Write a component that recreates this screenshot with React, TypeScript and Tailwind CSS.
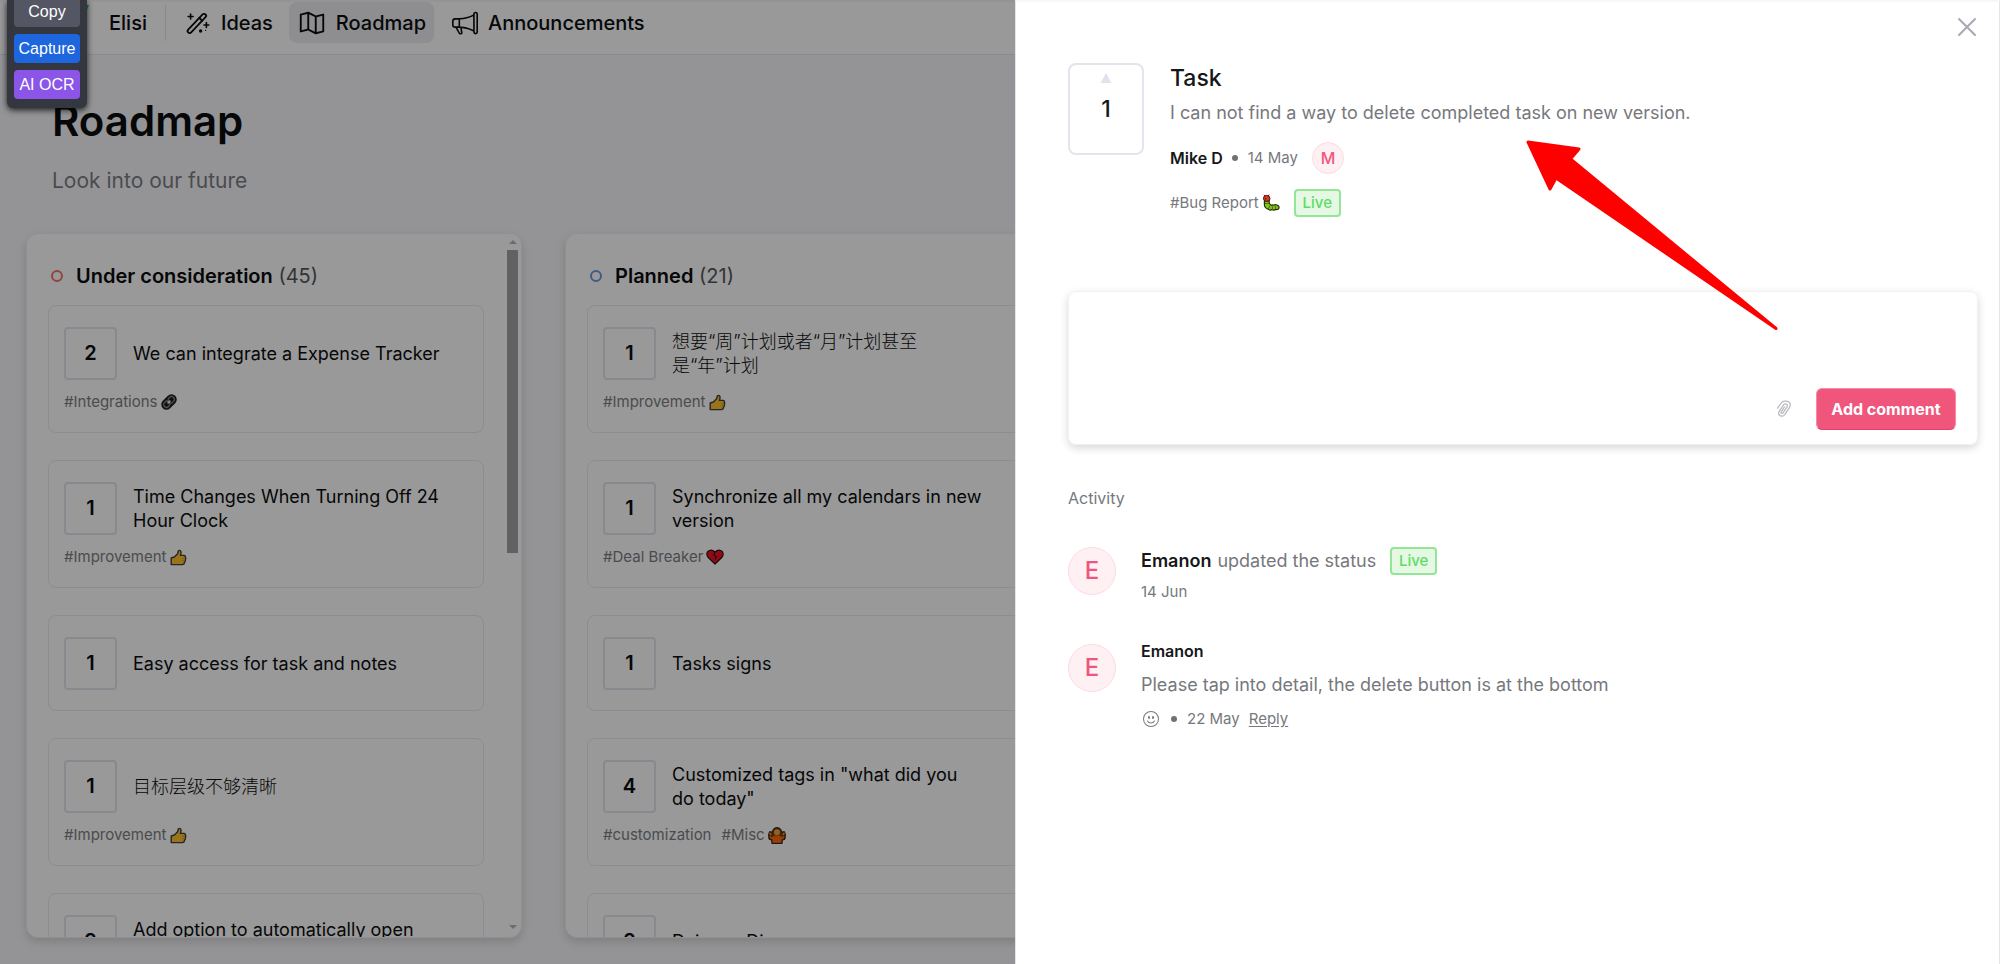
import type { ReactNode } from "react";
import { PiMapTrifold } from "react-icons/pi";
import { BsMegaphone, BsEmojiSmile } from "react-icons/bs";

function WandIcon() {
  return (
    <svg width="24" height="24" viewBox="0 0 24 24" fill="none" stroke="currentColor" strokeWidth="1.8" strokeLinecap="round" strokeLinejoin="round" aria-hidden="true">
      <path d="M2.2 18.6 16.6 3.4a2 2 0 0 1 2.9 0 2 2 0 0 1 0 2.8L5.2 21.4a2 2 0 0 1-3 0 2 2 0 0 1 0-2.8Z" />
      <path d="m13.4 7 2.8 2.8" />
      <path d="M4.6 3v5M2.1 5.5h5M20.4 11.6v4.8M18 14h4.8" strokeWidth="1.6" />
      <circle cx="14.6" cy="20" r="1.7" fill="currentColor" stroke="none" />
      <circle cx="19.6" cy="19.4" r="0.6" fill="currentColor" stroke="none" />
    </svg>
  );
}

function ThumbIcon() {
  return (
    <svg width="17" height="17" viewBox="0 0 17 17" className="shrink-0" aria-hidden="true">
      <path d="M1.2 9 4.4 8 7.6 4.8 8.400 1.800Q9.600.8 10.800 2.200q.6 1.600-.4 4.200h3.600q1.800.4 1.400 2 .6 1.200 0 2.400.2 1.400-.8 2.200-.2 2.600-2.400 2.600H1.200Z" fill="#ffc12e" stroke="#3f4043" strokeWidth="1.4" strokeLinejoin="round" />
      <path d="M12 9.300h2.600M12 11.800h2.400" stroke="#c98a12" strokeWidth="0.8" />
    </svg>
  );
}

function LinkIcon() {
  return (
    <svg width="18" height="18" viewBox="0 0 18 18" className="shrink-0" aria-hidden="true">
      <g transform="rotate(-45 9 9)">
        <rect x="0.2" y="3.8" width="17.600" height="10.400" rx="5.200" fill="#1d1d1f" />
        <rect x="2.600" y="6.200" width="6.400" height="5.600" rx="2.800" fill="none" stroke="#8b8b90" strokeWidth="1.200" />
        <rect x="8.800" y="6.200" width="6.600" height="5.600" rx="2.800" fill="none" stroke="#8b8b90" strokeWidth="1.200" />
        <rect x="7" y="8" width="4" height="2" rx="1" fill="#e8e8ea" />
      </g>
    </svg>
  );
}

function BrokenHeartIcon() {
  return (
    <svg width="18" height="16" viewBox="0 0 18 16" className="shrink-0" aria-hidden="true">
      <path d="M9 15 2 8.200Q-.2 4.800 1.800 2.400 5.400-.600 9 3 12.600-.600 16.200 2.400 18.200 4.800 16 8.200Z" fill="#f01226" stroke="#2b1214" strokeWidth="1.200" strokeLinejoin="round" />
      <path d="M9 3.200 7.800 6l2.400 1.600L9 10.400" fill="none" stroke="#2b1214" strokeWidth="1.200" />
    </svg>
  );
}

function ShrugIcon() {
  return (
    <svg width="18" height="17" viewBox="0 0 18 17" className="shrink-0" aria-hidden="true">
      <path d="M4.600 3.600Q5.400.6 9 .6t4.400 3l.4 1.600 2.600-.6 1 2.600-.4 5-2.800 1V16.400H3.800V13.200L1 12.200l-.4-5 1-2.600 2.600.6Z" fill="#7a3c14" stroke="#2b1a10" strokeWidth="1" strokeLinejoin="round" />
      <path d="M6.400 8.400h5.200l2.800 2 1-1.800 1 .4-.6 2.400-2.400 1v3.400H4.600v-3.400l-2.400-1L1.600 9l1-.4 1 1.800Z" fill="#fb6a0e" />
      <circle cx="9" cy="5.200" r="3" fill="#e8a838" />
      <path d="m1.600 6 1.400 1.600M16.400 6 15 7.600" stroke="#ffb83d" strokeWidth="1.400" />
    </svg>
  );
}

function CaterpillarIcon() {
  return (
    <svg width="18" height="18" viewBox="0 0 18 18" className="shrink-0" aria-hidden="true">
      <path d="M2.400 7v4q.4 3.200 4.200 4.400 1.600 1.400 3.400.2 2 1.200 3.600 0 2.800.4 3.400-1.600.2-2.600-2.200-3-1.400-.8-2.800.2-1.600-.8-2.800.200L7.200 9.400V6Z" fill="#86c41c" stroke="#23300c" strokeWidth="1.200" strokeLinejoin="round" />
      <path d="M3 9.400h4M6.200 15l2-3.400M10.400 15.400v-3.200M13.600 15l-.4-3.200" stroke="#3f6b0c" strokeWidth="0.900" />
      <path d="M1.400 4.600Q1.400 1.400 4.600 1.400t3.400 3.200Q8 7.400 4.800 7.400T1.400 4.600Z" fill="#e8351c" stroke="#3a1410" strokeWidth="1" />
      <path d="M2 .8 3.200 2M7.200.6 6.200 2" stroke="#3a1410" strokeWidth="1" />
      <circle cx="3.800" cy="4.800" r="0.700" fill="#2b1410" />
    </svg>
  );
}

function PaperclipIcon() {
  return (
    <svg width="16" height="18" viewBox="0 0 16 18" fill="none" stroke="#b9b9c0" strokeWidth="1.300" strokeLinecap="round" aria-hidden="true">
      <path d="m1.600 8.200 3.600-5.200Q6.400 1.200 9 1.200h1.600q3.600.600 3.600 3.800 0 1.400-.8 2.600l-4.600 7Q7.200 16.800 4.600 15.800 1.600 14.400 3.200 11.400L7.600 4.800Q9 3.200 10.600 4.200q1.400 1 .4 2.600l-4 6q-.8 1-1.600.4-.6-.6 0-1.600l3-4.600" />
    </svg>
  );
}

type Tag = { label: string; icon?: ReactNode };
type Idea = { votes: number; title: string; tags?: Tag[]; lang?: string };

const improvement: Tag = { label: "#Improvement", icon: <ThumbIcon /> };

const consideration: Idea[] = [
  { votes: 2, title: "We can integrate a Expense Tracker", tags: [{ label: "#Integrations", icon: <LinkIcon /> }] },
  { votes: 1, title: "Time Changes When Turning Off 24\nHour Clock", tags: [improvement] },
  { votes: 1, title: "Easy access for task and notes" },
  { votes: 1, title: "目标层级不够清晰", tags: [improvement], lang: "zh-CN" },
  { votes: 2, title: "Add option to automatically open\ntasks", tags: [] },
];

const planned: Idea[] = [
  { votes: 1, title: "想要“周”计划或者“月”计划甚至\n是“年”计划", tags: [improvement], lang: "zh-CN" },
  { votes: 1, title: "Synchronize all my calendars in new\nversion", tags: [{ label: "#Deal Breaker", icon: <BrokenHeartIcon /> }] },
  { votes: 1, title: "Tasks signs" },
  { votes: 4, title: 'Customized tags in "what did you\ndo today"', tags: [{ label: "#customization" }, { label: "#Misc", icon: <ShrugIcon /> }] },
  { votes: 2, title: "Dairy vs Diary" },
];

function IdeaCard({ idea }: { idea: Idea }) {
  return (
    <article className={`shrink-0 rounded-lg border border-[#ebebf0] px-[15px] pt-[21px] ${idea.tags ? "h-32" : "h-24"}`}>
      <div className="flex items-center gap-4">
        <button type="button" className="h-[53px] w-[53px] shrink-0 rounded border-2 border-[#e4e3ee] pb-[2px] text-xl font-semibold text-[#0b0c0e]">
          {idea.votes}
        </button>
        <h3 lang={idea.lang} className={`min-w-0 flex-1 text-lg leading-6 whitespace-pre-line text-[#0b0c0e] ${idea.lang ? "font-light" : "font-normal"}`}>{idea.title}</h3>
      </div>
      {idea.tags && (
        <div className="mt-[10px] flex gap-[10px] text-[15px] leading-6 text-[#7c7e83]">
          {idea.tags.map((tag) => (
            <span key={tag.label} className="flex items-center gap-[3px]">
              {tag.label}
              {tag.icon}
            </span>
          ))}
        </div>
      )}
    </article>
  );
}

function Column({ title, count, ring, ideas }: { title: string; count: number; ring: string; ideas: Idea[] }) {
  return (
    <section className="flex w-[496px] shrink-0 overflow-hidden rounded-xl border border-[#f1f1f4] bg-white shadow-[0_4px_10px_rgba(0,0,0,0.14)]">
      <div className="flex min-w-0 flex-1 flex-col overflow-hidden pr-[23px] pl-[21px]">
        <h2 className="flex shrink-0 items-center gap-[13px] pt-7 pb-[15px] pl-[3px] text-xl leading-7 text-[#55575c]">
          <span className={`h-3 w-3 rounded-full border-2 ${ring}`} />
          <span>
            <span className="font-semibold text-[#0b0c0e]">{title}</span> ({count})
          </span>
        </h2>
        <div className="flex flex-col gap-[27px]">
          {ideas.map((idea) => (
            <IdeaCard key={idea.title} idea={idea} />
          ))}
        </div>
      </div>
      <div className="flex w-[14px] shrink-0 flex-col items-center pt-[6px] pr-[3px] pb-2" aria-hidden="true">
        <svg width="8" height="4" viewBox="0 0 8 4"><path d="M4 0 8 4H0Z" fill="#b4b4b8" /></svg>
        <div className="mt-[6px] h-[44%] w-[11px] bg-[#a2a2a5]" />
        <svg width="8" height="4" viewBox="0 0 8 4" className="mt-auto"><path d="M0 0h8L4 4Z" fill="#b4b4b8" /></svg>
      </div>
    </section>
  );
}

function Board() {
  return (
    <div className="flex h-screen flex-col overflow-hidden bg-[#f7f7fa] pt-[2px]">
      <header className="flex h-[53px] shrink-0 items-start border-b border-[#e6e6ec] bg-white text-xl font-medium text-[#0b0c0e]">
        <div className="flex h-[41px] items-center">
          <a href="#home" className="pl-[109px]">Elisi</a>
          <span className="ml-[18px] h-9 w-px bg-[#e4e4ea]" />
          <nav className="flex h-full items-center">
            <a href="#ideas" className="flex items-center gap-[11px] pl-5"><WandIcon />Ideas</a>
            <a href="#roadmap" className="ml-4 flex h-full items-center gap-[9px] rounded-lg bg-[#ededf2] pr-2 pl-2"><PiMapTrifold size={30} />Roadmap</a>
            <a href="#announcements" className="flex items-center gap-[10px] pl-[18px]"><BsMegaphone size={26} />Announcements</a>
          </nav>
        </div>
      </header>
      <div className="shrink-0 pt-[38px] pl-[52px]">
        <h1 className="text-[42px] leading-[56px] font-semibold text-[#0b0c0e] [font-optical-sizing:none]">Roadmap</h1>
        <p className="mt-4 text-[21px] leading-8 text-[#7c7e83]">Look into our future</p>
      </div>
      <main className="mt-9 mb-[26px] flex min-h-0 flex-1 gap-[43px] pl-[26px]">
        <Column title="Under consideration" count={45} ring="border-[#f0746a]" ideas={consideration} />
        <Column title="Planned" count={21} ring="border-[#6d96e0]" ideas={planned} />
      </main>
    </div>
  );
}

function LiveBadge() {
  return (
    <span className="flex h-7 w-[47px] items-center justify-center rounded border-2 border-[#92e696] bg-[#e4f8e4] text-[15px] font-medium text-[#5fdc64]">
      Live
    </span>
  );
}

function Avatar() {
  return (
    <span className="flex h-12 w-12 shrink-0 items-center justify-center rounded-full border border-[#fddbe3] bg-[#fef0f3] text-2xl font-medium text-[#f0567c]">
      E
    </span>
  );
}

function Dot() {
  return <span className="h-[6px] w-[6px] rounded-full bg-[#6f7176]" />;
}

function Drawer() {
  return (
    <aside className="absolute inset-y-0 right-0 w-[49.25%] border-x border-t-2 border-x-[#e4e4ea] border-t-[#f7f7fa] bg-white pr-[21px] pl-[52px] text-[#76787d]">
      <button type="button" aria-label="Close" className="absolute top-[15px] right-[22px]">
        <svg width="20" height="20" viewBox="0 0 20 20" stroke="#a9a8b4" strokeWidth="2" strokeLinecap="round"><path d="m2 2 16 16M18 2 2 18" /></svg>
      </button>

      <div className="flex gap-[26px] pt-[61px]">
        <button type="button" className="flex h-[92px] w-[76px] shrink-0 flex-col items-center rounded-lg border-2 border-[#e5e4ee] pt-2 text-[23px] leading-8 font-medium text-[#16171a]">
          <svg width="12" height="10" viewBox="0 0 12 10" aria-hidden="true"><path d="M6 0 11.500 10H.5Z" fill="#e3e2ec" /></svg>
          <span className="mt-[10px]">1</span>
        </button>
        <div>
          <h2 className="text-[23px] leading-[30px] font-medium text-[#16171a]">Task</h2>
          <p className="mt-[6px] text-lg leading-7">I can not find a way to delete completed task on new version.</p>
          <div className="mt-[15px] flex items-center text-[15px] leading-8">
            <b className="mr-[9px] text-base leading-8 font-semibold text-[#16171a]">Mike D</b>
            <Dot />
            <span className="ml-[10px]">14 May</span>
            <span className="ml-[14px] flex h-8 w-8 items-center justify-center rounded-full border border-[#fddbe3] bg-[#fef0f3] text-base font-medium text-[#f0567c]">M</span>
          </div>
          <div className="mt-[15px] flex items-center text-[15px] leading-7">
            <span className="mr-[3px]">#Bug Report</span>
            <CaterpillarIcon />
            <span className="ml-[14px]"><LiveBadge /></span>
          </div>
        </div>
      </div>

      <form className="mt-[74px] flex h-[154px] flex-col rounded-lg border border-[#f1f1f4] pr-[21px] pb-[14px] shadow-[0_3px_8px_rgba(0,0,0,0.16)]">
        <textarea aria-label="Comment" className="min-h-0 w-full flex-1 resize-none p-4 text-lg outline-none" />
        <div className="flex items-center justify-end gap-6">
          <button type="button" aria-label="Attach file"><PaperclipIcon /></button>
          <button type="button" className="h-[42px] w-[140px] rounded-md border border-[#f58ba5] border-b-[#ea3f68] bg-[#f0567c] text-base font-bold text-white">Add comment</button>
        </div>
      </form>

      <h3 className="mt-[39px] text-base leading-7">Activity</h3>

      <div className="mt-[35px] flex gap-[25px]">
        <Avatar />
        <div>
          <p className="flex items-center text-lg leading-7">
            <b className="mr-[6px] font-semibold text-[#16171a]">Emanon</b>updated the status
            <span className="ml-[14px]"><LiveBadge /></span>
          </p>
          <p className="mt-[5px] text-[15px] leading-6">14 Jun</p>
        </div>
      </div>

      <div className="mt-[33px] flex gap-[25px]">
        <div className="pt-[7px]"><Avatar /></div>
        <div>
          <b className="block text-base leading-7 font-semibold text-[#16171a]">Emanon</b>
          <p className="mt-[6px] text-lg leading-7">Please tap into detail, the delete button is at the bottom</p>
          <div className="mt-2 flex items-center text-[15px] leading-6">
            <button type="button" aria-label="Add reaction" className="mr-3 ml-[2px]"><BsEmojiSmile size={16} /></button>
            <Dot />
            <span className="mr-[9px] ml-[10px]">22 May</span>
            <a href="#reply" className="underline underline-offset-2">Reply</a>
          </div>
        </div>
      </div>
    </aside>
  );
}

function CaptureMenu() {
  return (
    <div className="absolute top-0 left-[7px] flex w-20 flex-col gap-[7px] rounded-b-md bg-[#353740] px-[7px] pb-[9px] font-['Liberation_Sans',sans-serif] text-base leading-[29px] text-white shadow-[0_2px_6px_rgba(0,0,0,0.8)]">
      <button type="button" className="h-[27px] rounded-b-sm bg-[#545663] pb-1 leading-[19px]">Copy</button>
      <button type="button" className="h-[29px] rounded-sm bg-[#1e66de]">Capture</button>
      <button type="button" className="h-[29px] rounded-sm bg-[#8b55e8]">AI OCR</button>
    </div>
  );
}

function Pointer() {
  return (
    <svg width="256" height="194" viewBox="0 0 256 194" className="absolute top-[138px] left-[76.2%]" aria-hidden="true">
      <path d="M4 4 55 11 46.500 21 252 190.500 32 40 26 51Z" fill="#f00" stroke="#f00" strokeWidth="3" strokeLinejoin="round" />
    </svg>
  );
}

export default function App() {
  return (
    <div className="relative h-screen overflow-hidden font-['Inter','Noto_Sans_CJK_SC',sans-serif]">
      <Board />
      <div className="absolute inset-0 bg-black/40" />
      <svg width="10" height="10" viewBox="0 0 10 10" className="absolute top-1 left-20" aria-hidden="true"><path d="M0 1h9L6 8 0 9Z" fill="#068a3e" /></svg>
      <Drawer />
      <CaptureMenu />
      <Pointer />
    </div>
  );
}
